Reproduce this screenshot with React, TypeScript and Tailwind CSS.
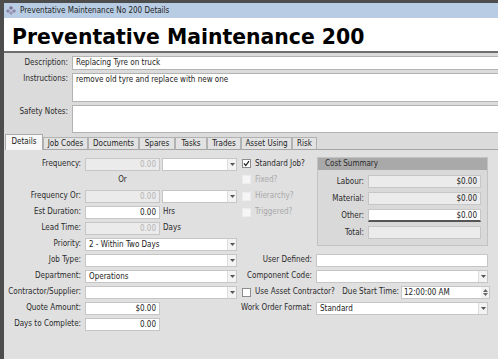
import React from 'react'

const font = "font-['DejaVu_Sans_Condensed','Liberation_Sans',sans-serif]"

function DropArrow() {
  return (
    <div className="w-[9px] h-full flex items-center justify-center bg-[#f3f3f3] border-l border-[#dcdcdc]">
      <svg width="5" height="3" viewBox="0 0 5 3">
        <path d="M0 0 L5 0 L2.5 3 Z" fill="#555" />
      </svg>
    </div>
  )
}

function Combo({ value = '', w }: { value?: string; w: string }) {
  return (
    <div className={`${w} h-[13px] flex bg-white border border-[#c6c6c6]`}>
      <span className="flex-1 pl-[3px] leading-[11px] text-[8px] text-[#222] whitespace-nowrap overflow-hidden">{value}</span>
      <DropArrow />
    </div>
  )
}

function Num({ value = '', disabled = false, w = 'w-[75px]', white = false }: { value?: string; disabled?: boolean; w?: string; white?: boolean }) {
  const bg = white ? 'bg-white' : disabled ? 'bg-[#ebebeb]' : 'bg-white'
  return (
    <div className={`${w} h-[13px] ${bg} border border-[#c6c6c6] text-right pr-[3px] leading-[11px] text-[8px] ${disabled ? 'text-[#b4b4b4]' : 'text-[#222]'}`}>
      {value}
    </div>
  )
}

function Check({ label, checked = false, disabled = false }: { label: string; checked?: boolean; disabled?: boolean }) {
  return (
    <div className="flex items-center">
      <div className={`w-[9px] h-[9px] flex items-center justify-center border ${disabled ? 'border-[#ececec] bg-[#f6f6f6]' : 'border-[#8d8d8d] bg-white'}`}>
        {checked && (
          <svg width="7" height="7" viewBox="0 0 7 7">
            <path d="M1 3.5 L2.8 5.5 L6 1.2" stroke="#222" strokeWidth="1.2" fill="none" />
          </svg>
        )}
      </div>
      <span className={`ml-[4px] text-[8px] whitespace-nowrap ${disabled ? 'text-[#a9a9a9]' : 'text-[#2b2b2b]'}`}>{label}</span>
    </div>
  )
}

function Row({ label, children }: { label: string; children?: React.ReactNode }) {
  return (
    <div className="h-[16px] flex items-center">
      <span className="w-[77px] mr-[4px] text-right text-[8px] text-[#2b2b2b] whitespace-nowrap">{label}</span>
      {children}
    </div>
  )
}

function RightRow({ label, children }: { label: string; children?: React.ReactNode }) {
  return (
    <div className="h-[16px] flex items-center">
      <span className="w-[72px] mr-[4px] flex justify-end text-[8px] text-[#2b2b2b] whitespace-nowrap">{label}</span>
      {children}
    </div>
  )
}

function CostRow({ label, value = '', tone }: { label: string; value?: string; tone: 'gray' | 'white' }) {
  return (
    <div className="h-[13px] mb-[4px] flex items-center">
      <span className="w-[46px] mr-[4px] text-right text-[8px] text-[#2b2b2b]">{label}</span>
      <div
        className={`w-[113px] h-[13px] text-right pr-[3px] leading-[11px] text-[8px] text-[#222] border border-[#c6c6c6] ${
          tone === 'white' ? 'bg-white border-b-2 border-b-[#555]' : 'bg-[#ebebeb]'
        }`}
      >
        {value}
      </div>
    </div>
  )
}

const tabs = [
  { name: 'Job Codes', w: 'w-[45px]' },
  { name: 'Documents', w: 'w-[51px]' },
  { name: 'Spares', w: 'w-[36px]' },
  { name: 'Tasks', w: 'w-[32px]' },
  { name: 'Trades', w: 'w-[34px]' },
  { name: 'Asset Using', w: 'w-[51px]' },
  { name: 'Risk', w: 'w-[25px]' },
]

export default function App() {
  return (
    <div className={`w-[498px] h-[359px] overflow-hidden bg-[#4d4d4d] pt-[3px] pl-[4px] ${font}`}>
      <div className="h-full flex flex-col bg-[#e0e0e0]">
        {/* title bar */}
        <div className="h-[15px] shrink-0 flex items-center bg-[#b8cde3] pl-[1px]">
          <svg width="12" height="9" viewBox="0 0 12 9">
            <rect x="4.5" y="0.5" width="3" height="3" transform="rotate(45 6 2)" fill="#7d7399" />
            <rect x="1.5" y="3.5" width="3" height="3" transform="rotate(45 3 5)" fill="#8a86a6" />
            <rect x="7.5" y="3.5" width="3" height="3" transform="rotate(45 9 5)" fill="#8a86a6" />
            <rect x="4.5" y="5.5" width="3" height="3" transform="rotate(45 6 7)" fill="#9b98b3" />
          </svg>
          <span className="ml-[3px] text-[8px] text-[#1e1e1e] whitespace-nowrap">Preventative Maintenance No 200 Details</span>
        </div>

        {/* header */}
        <div className="h-[35px] shrink-0 bg-white border-b-2 border-[#6f6f6f] pl-[8px] pt-[9px]">
          <h1 className="font-['DejaVu_Sans',sans-serif] font-bold text-[20.4px] leading-[20px] text-black whitespace-nowrap">
            Preventative Maintenance 200
          </h1>
        </div>

        {/* description block */}
        <div className="shrink-0 bg-[#dbdbdb] pt-[3px] flex flex-col gap-[3px]">
          <div className="h-[14px] flex">
            <span className="w-[64px] mr-[4px] text-right text-[8px] leading-[14px] text-[#2b2b2b]">Description:</span>
            <div className="flex-1 bg-white border border-r-0 border-[#b3b3b3] pl-[3px] text-[8px] leading-[12px] text-[#222]">Replacing Tyre on truck</div>
          </div>
          <div className="h-[29px] flex">
            <span className="w-[64px] mr-[4px] text-right text-[8px] leading-[11px] text-[#2b2b2b]">Instructions:</span>
            <div className="flex-1 bg-white border border-r-0 border-[#b3b3b3] pl-[3px] text-[8px] leading-[11px] text-[#222]">remove old tyre and replace with new one</div>
          </div>
          <div className="h-[28px] flex">
            <span className="w-[64px] mr-[4px] text-right text-[8px] leading-[14px] text-[#2b2b2b]">Safety Notes:</span>
            <div className="flex-1 bg-white border border-r-0 border-[#b3b3b3]" />
          </div>
        </div>

        {/* tabs */}
        <div className="h-[17px] shrink-0 flex items-end pl-[1px] pt-[1px] bg-[#dbdbdb]">
          <div className="w-[38px] h-[16px] bg-[#f7f7f7] border border-b-0 border-[#ababab] text-center text-[8px] leading-[13px] text-[#222]">Details</div>
          {tabs.map(t => (
            <div
              key={t.name}
              className={`${t.w} h-[13px] bg-[#e2e2e2] border border-[#b2b2b2] border-b-[#a5a5a5] text-center text-[8px] leading-[11px] text-[#222] whitespace-nowrap`}
            >
              {t.name}
            </div>
          ))}
          <div className="flex-1 h-full border-b border-[#a5a5a5]" />
        </div>

        {/* details tab */}
        <div className="flex-1 flex pt-[6px] bg-[#e0e0e0]">
          <div className="w-[236px] shrink-0 flex flex-col">
            <Row label="Frequency:">
              <Num value="0.00" disabled />
              <div className="w-[2px]" />
              <Combo w="w-[75px]" />
            </Row>
            <div className="h-[16px] flex items-center">
              <span className="w-[81px]" />
              <span className="w-[75px] text-center text-[8px] text-[#2b2b2b]">Or</span>
            </div>
            <Row label="Frequency Or:">
              <Num value="0.00" disabled />
              <div className="w-[2px]" />
              <Combo w="w-[75px]" />
            </Row>
            <Row label="Est Duration:">
              <Num value="0.00" white />
              <span className="ml-[3px] text-[8px] text-[#2b2b2b]">Hrs</span>
            </Row>
            <Row label="Lead Time:">
              <Num value="0.00" disabled />
              <span className="ml-[3px] text-[8px] text-[#2b2b2b]">Days</span>
            </Row>
            <Row label="Priority:">
              <Combo w="w-[152px]" value="2 - Within Two Days" />
            </Row>
            <Row label="Job Type:">
              <Combo w="w-[152px]" />
            </Row>
            <Row label="Department:">
              <Combo w="w-[152px]" value="Operations" />
            </Row>
            <Row label="Contractor/Supplier:">
              <Combo w="w-[152px]" />
            </Row>
            <Row label="Quote Amount:">
              <Num value="$0.00" white />
            </Row>
            <Row label="Days to Complete:">
              <Num value="0.00" white />
            </Row>
          </div>

          <div className="w-[250px] shrink-0 flex flex-col">
            <div className="h-[96px] flex">
              <div className="w-[77px] pl-[2px] flex flex-col">
                <div className="h-[15px] flex items-center"><Check label="Standard Job?" checked /></div>
                <div className="h-[17px] flex items-center"><Check label="Fixed?" disabled /></div>
                <div className="h-[16px] flex items-center"><Check label="Hierarchy?" disabled /></div>
                <div className="h-[16px] flex items-center"><Check label="Triggered?" disabled /></div>
              </div>
              <div className="w-[171px] h-[89px] mt-[1px] border border-[#c2c2c2] bg-[#d9d9d9]">
                <div className="h-[12px] bg-[#a9a9a9] pl-[7px] text-[8px] leading-[12px] text-[#2b2b2b]">Cost Summary</div>
                <div className="pt-[5px]">
                  <CostRow label="Labour:" value="$0.00" tone="gray" />
                  <CostRow label="Material:" value="$0.00" tone="gray" />
                  <CostRow label="Other:" value="$0.00" tone="white" />
                  <CostRow label="Total:" tone="gray" />
                </div>
              </div>
            </div>
            <RightRow label="User Defined:">
              <div className="w-[172px] h-[13px] bg-white border border-[#c6c6c6]" />
            </RightRow>
            <RightRow label="Component Code:">
              <Combo w="w-[172px]" />
            </RightRow>
            <div className="h-[16px] flex items-center pl-[2px]">
              <Check label="Use Asset Contractor?" />
              <span className="ml-auto mr-[2px] text-[8px] text-[#2b2b2b] whitespace-nowrap">Due Start Time:</span>
              <div className="w-[89px] h-[13px] flex bg-white border border-[#c6c6c6]">
                <span className="flex-1 pl-[2px] text-[8px] leading-[11px] text-[#222] whitespace-nowrap">12:00:00 AM</span>
                <div className="w-[8px] h-full flex flex-col items-center justify-center gap-[1px] bg-[#f3f3f3]">
                  <svg width="5" height="3" viewBox="0 0 5 3"><path d="M0 3 L5 3 L2.5 0 Z" fill="#666" /></svg>
                  <svg width="5" height="3" viewBox="0 0 5 3"><path d="M0 0 L5 0 L2.5 3 Z" fill="#666" /></svg>
                </div>
              </div>
            </div>
            <RightRow label="Work Order Format:">
              <Combo w="w-[172px]" value="Standard" />
            </RightRow>
          </div>
        </div>
      </div>
    </div>
  )
}
